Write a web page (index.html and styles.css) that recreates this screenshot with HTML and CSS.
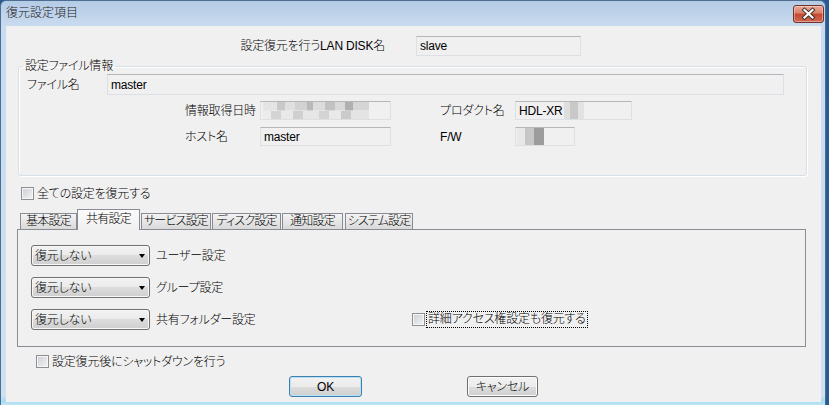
FILE: index.html
```html
<!DOCTYPE html>
<html>
<head>
<meta charset="utf-8">
<title>復元設定項目</title>
<link rel="stylesheet" href="styles.css">
</head>
<body>
	<div class="window">
		<div class="titlebar">
			<span class="title">復元設定項目</span>
			<span class="close">
				<svg width="31" height="18" viewBox="0 0 31 18">
					<path d="M11.5 5 L19.5 12.5 M19.5 5 L11.5 12.5" stroke="#3b2a26" stroke-width="4" stroke-linecap="square" fill="none"/>
					<path d="M11.5 5 L19.5 12.5 M19.5 5 L11.5 12.5" stroke="#fff" stroke-width="2.2" stroke-linecap="square" fill="none"/>
				</svg>
			</span>
		</div>

		<div class="client">
			<!-- 対象 -->
			<div class="target">
				<span class="lbl">設定復元を行うLAN DISK名</span>
				<div class="field">slave</div>
			</div>

			<!-- 設定ファイル情報 -->
			<fieldset class="group">
				<legend>設定ファイル情報</legend>
				<div class="file-row">
					<span class="lbl">ファイル名</span>
					<div class="field">master</div>
				</div>
				<div class="info">
					<span>情報取得日時</span>
					<div class="field f-date"><span class="mosaic m-date"></span></div>
					<span>プロダクト名</span>
					<div class="field f-product">HDL-XR<span class="mosaic m-product"></span></div>
					<span>ホスト名</span>
					<div class="field f-date">master</div>
					<span>F/W</span>
					<div class="field f-fw"><span class="mosaic m-fw"></span></div>
				</div>
			</fieldset>

			<div class="check all">
				<span class="chk"></span><span>全ての設定を復元する</span>
			</div>

			<!-- タブ -->
			<div class="tabbox">
				<div class="tabs">
					<span class="tab t-basic">基本設定</span>
					<span class="tab t-share active">共有設定</span>
					<span class="tab t-service">サービス設定</span>
					<span class="tab t-disk">ディスク設定</span>
					<span class="tab t-notice">通知設定</span>
					<span class="tab t-system">システム設定</span>
				</div>
				<div class="panel">
					<div class="opt">
						<div class="combo"><span>復元しない</span><i class="arrow"></i></div>
						<span class="opt-label">ユーザー設定</span>
					</div>
					<div class="opt">
						<div class="combo"><span>復元しない</span><i class="arrow"></i></div>
						<span class="opt-label">グループ設定</span>
					</div>
					<div class="opt">
						<div class="combo"><span>復元しない</span><i class="arrow"></i></div>
						<span class="opt-label">共有フォルダー設定</span>
						<div class="check detail">
							<span class="chk"></span><span class="focus">詳細アクセス権設定も復元する</span>
						</div>
					</div>
				</div>
			</div>

			<div class="check shutdown">
				<span class="chk"></span><span>設定復元後にシャットダウンを行う</span>
			</div>

			<div class="buttons">
				<button class="btn btn-ok">OK</button>
				<button class="btn btn-cancel">キャンセル</button>
			</div>
		</div>
	</div>
</body>
</html>
```

FILE: styles.css
```css
/* ダイアログ */
*{margin:0;padding:0;box-sizing:border-box;}
body{
	width:829px;
	height:405px;
	overflow:hidden;
	background:#2a5a94;
	font:300 12px/16px "Liberation Sans","Noto Sans CJK JP",sans-serif;
	font-feature-settings:"palt";
	letter-spacing:-0.2px;
	color:#000;
}

.window{
	width:826px;
	height:405px;
	padding:0 4px 4px 5px;
	border:1px solid #4d6d93;
	border-bottom:0;
	border-radius:6px 6px 0 0;
	background:linear-gradient(#b4cbe5 0,#c9dbef 25px,#cfe0f1 395px,#a6dcf0 400px,#c8e8f5 405px);
}
.titlebar{
	height:25px;
	display:flex;
	align-items:flex-start;
	justify-content:space-between;
}
.title{line-height:25px;color:#1b1b1b;letter-spacing:0;}
.close{
	width:31px;
	height:18px;
	margin:4px -3px 0 0;
	border:1px solid #70322a;
	border-radius:3px;
	background:linear-gradient(#e9a898 0,#d98069 45%,#c5472e 50%,#d06a55 100%);
	box-shadow:inset 0 0 0 1px rgba(255,255,255,.35);
}
.close svg{display:block;margin:-1px 0 0 -1px;}

.client{
	height:376px;
	background:#f0f0f0;
	padding-top:10px;
}

/* 入力欄 */
.field{
	height:20px;
	display:flex;
	align-items:center;
	padding-left:3px;
	background:#f0f0f0;
	border:1px solid #dcdfe3;
	border-top-color:#b3b6bb;
	white-space:nowrap;
	overflow:hidden;
}

.target{display:flex;align-items:center;height:20px;}
.target .lbl{width:379px;text-align:right;}
.target .field{width:165px;margin-left:31px;}

.group{
	width:789px;
	margin:2px 0 0 12px;
	padding:0 8px 29px 8px;
	border:1px solid #d5dfe5;
	border-radius:3px;
	box-shadow:inset 1px 1px #fff,1px 1px #fff;
}
.group legend{padding:0 2px;margin-left:-4px;line-height:16px;}

.file-row{display:flex;align-items:center;height:21px;}
.file-row .lbl{width:80px;}
.file-row .field{width:677px;height:21px;}

.info{
	display:grid;
	grid-template-columns:75px 180px 75px auto;
	grid-auto-rows:19px;
	row-gap:7px;
	align-items:center;
	margin:6px 0 0 158px;
}
.info .field{height:19px;}
.f-date{width:131px;}
.f-product{width:117px;}
.f-fw{width:60px;}

/* ぼかし */
.mosaic{display:inline-block;height:17px;}
.m-date{
	width:106px;
	margin-left:-1px;
	background:
		linear-gradient(90deg,#e4e4e4 0 14px,#c9c9c9 14px 22px,#e0e0e0 22px 32px,#d2d2d2 32px 44px,#b9b9b9 44px 50px,#dcdcdc 50px 62px,#c2c2c2 62px 72px,#d9d9d9 72px 82px,#b0b0b0 82px 90px,#d6d6d6 90px 106px) top/100% 50% no-repeat,
		linear-gradient(90deg,#ececec 0 8px,#d4d4d4 8px 18px,#e8e8e8 18px 30px,#cfcfcf 30px 40px,#e6e6e6 40px 56px,#d3d3d3 56px 66px,#e9e9e9 66px 78px,#cbcbcb 78px 88px,#e4e4e4 88px 106px) bottom/100% 50% no-repeat;
}
.m-product{
	width:20px;
	margin-left:2px;
	background:linear-gradient(90deg,#dedede 0 6px,#c8c8c8 6px 14px,#e2e2e2 14px 20px);
}
.m-fw{
	width:27px;
	margin-left:-2px;
	background:linear-gradient(90deg,#e8e8e8 0 8px,#c6c6c6 8px 17px,#9c9c9c 17px 27px);
}

/* チェックボックス */
.check{display:flex;align-items:center;height:13px;}
.chk{
	flex:none;
	width:13px;
	height:13px;
	margin-right:3px;
	border:1px solid #8e8f8f;
	background:linear-gradient(135deg,#cbcfd5,#f4f4f4);
	box-shadow:inset 0 0 0 1px #f6f6f6;
}
.all{margin:11px 0 0 15px;}
.shutdown{margin:8px 0 0 30px;}
.detail .chk{margin-right:2px;}
.detail .focus{outline:1px dotted #000;padding:0 1px;line-height:15px;}

/* タブ */
.tabbox{width:789px;margin:9px 0 0 11px;}
.tabs{display:flex;align-items:flex-end;height:20px;padding-left:3px;}
.tab{
	height:16px;
	line-height:15px;
	text-align:center;
	letter-spacing:-0.8px;
	border:1px solid #898c95;
	border-bottom:0;
	background:linear-gradient(#f3f3f3,#e6e6e6 50%,#d9d9d9);
	white-space:nowrap;
	overflow:hidden;
}
.tab.active{
	position:relative;
	z-index:1;
	height:21px;
	margin-bottom:-1px;
	line-height:18px;
	background:linear-gradient(#fbfbfb,#f0f0f0);
}
.t-basic{width:57px;}
.t-share{width:63px;}
.t-service{width:70px;margin-left:1px;}
.t-disk{width:69px;margin-left:1px;}
.t-notice{width:61px;margin-left:1px;}
.t-system{width:68px;margin-left:2px;}

.panel{
	height:118px;
	padding:15px 0 0 13px;
	border:1px solid #898c95;
	background:#f0f0f0;
}
.opt{display:flex;align-items:center;height:21px;margin-bottom:11px;}
.combo{
	width:119px;
	height:21px;
	display:flex;
	align-items:center;
	justify-content:space-between;
	padding:0 4px 0 3px;
	border:1px solid #707070;
	border-radius:3px;
	background:linear-gradient(#f2f2f2 0,#ebebeb 50%,#dddddd 50%,#cfcfcf 100%);
	box-shadow:inset 0 0 0 1px #f8f8f8;
}
.arrow{
	width:0;
	height:0;
	border-top:4px solid #000;
	border-left:3.5px solid transparent;
	border-right:3.5px solid transparent;
}
.opt-label{width:256px;margin-left:6px;}

/* ボタン */
.buttons{display:flex;margin-top:8px;padding-left:283px;}
.btn{
	height:21px;
	font:inherit;
	font-feature-settings:"palt";
	letter-spacing:inherit;
	color:#000;
	border:1px solid #707070;
	border-radius:3px;
	background:linear-gradient(#f2f2f2 0,#ebebeb 50%,#dddddd 50%,#cfcfcf 100%);
	box-shadow:inset 0 0 0 1px #fcfcfc;
}
.btn-ok{width:73px;border-color:#3c7fb1;box-shadow:inset 0 0 0 1px #b9e1f6;}
.btn-cancel{width:71px;margin-left:105px;}
```
